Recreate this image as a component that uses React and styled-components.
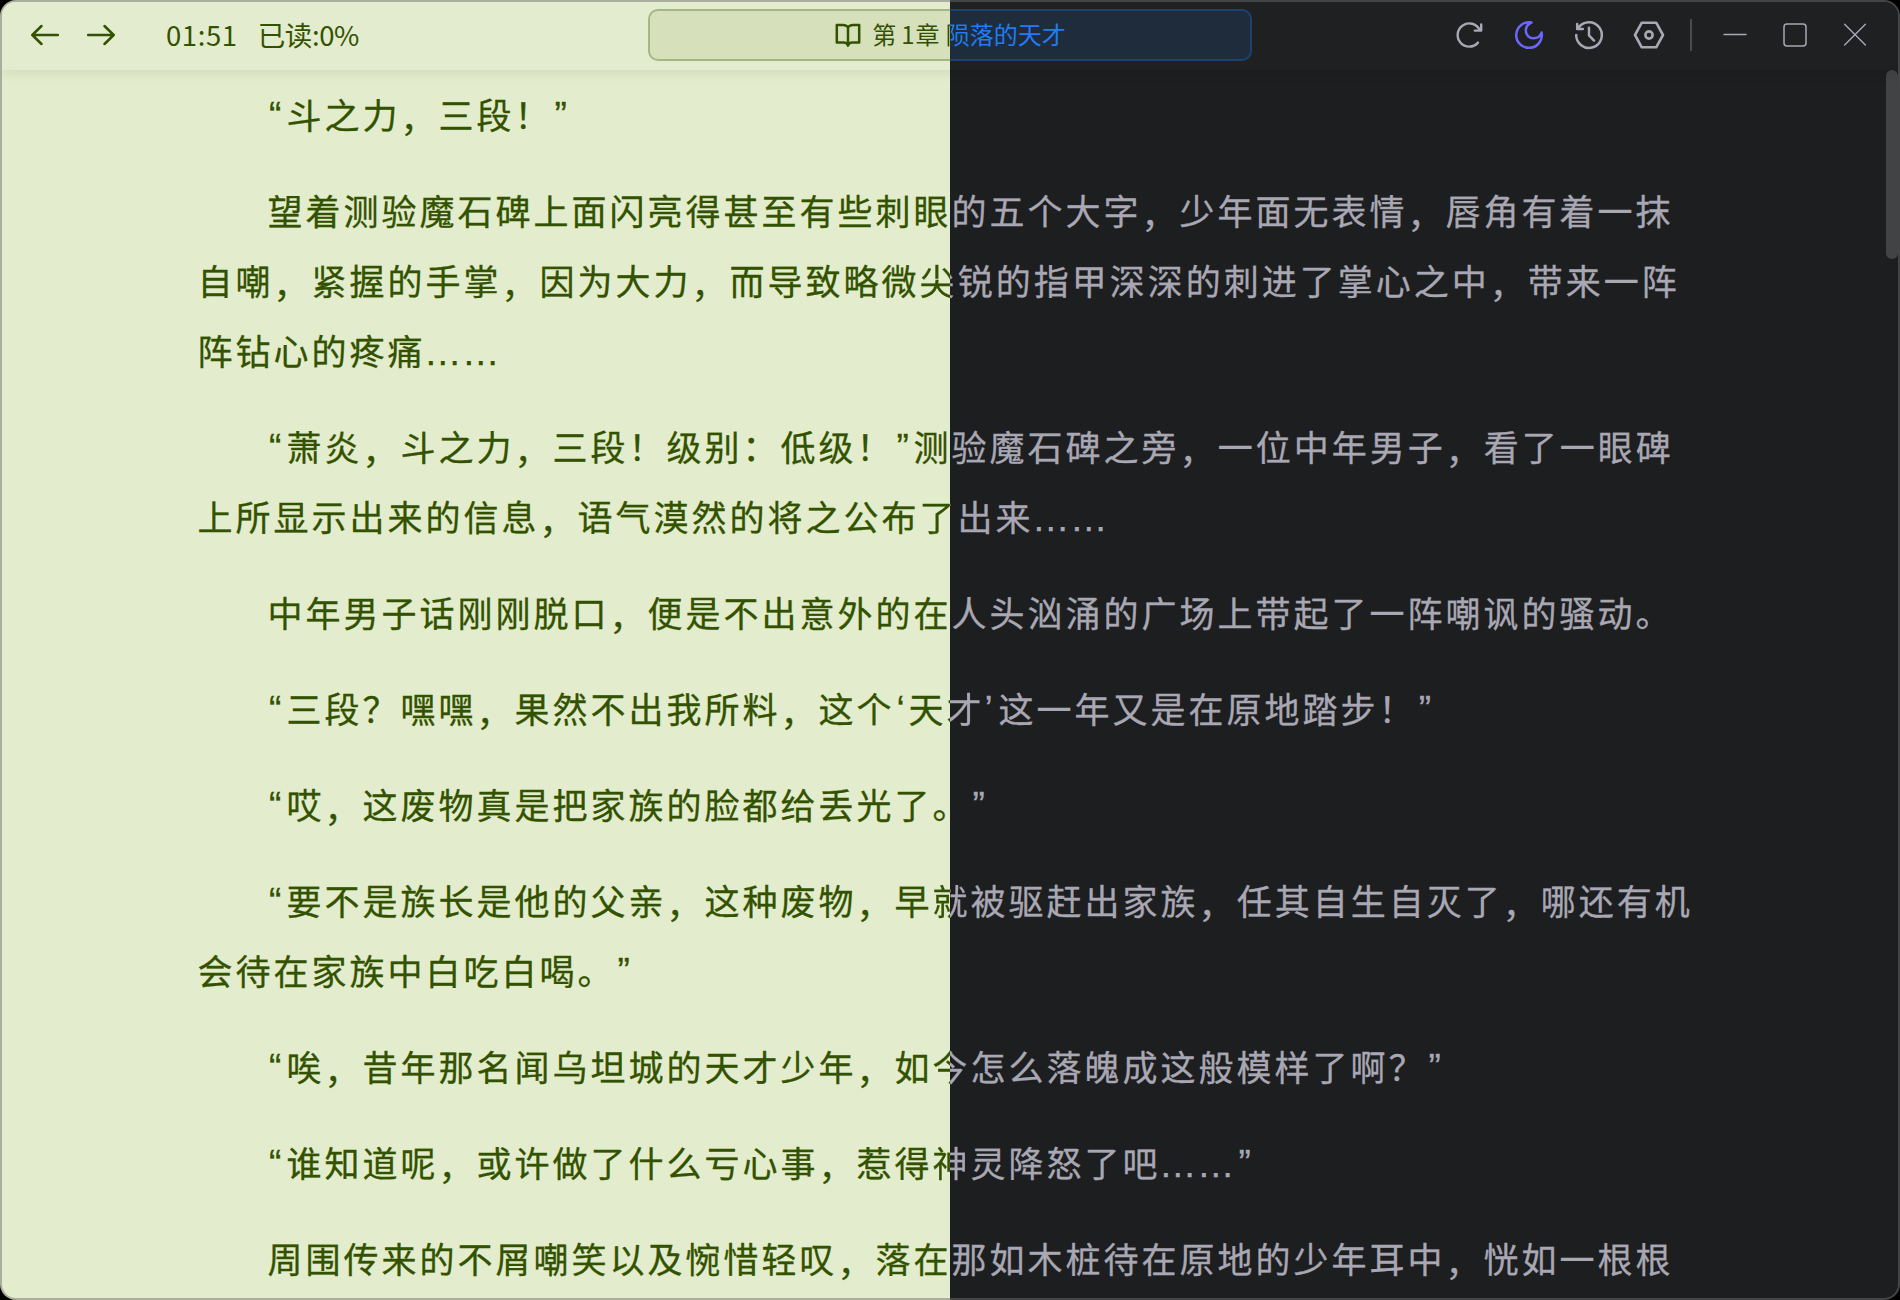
import React from "react";
import styled, { createGlobalStyle, css } from "styled-components";

const light = { ink: "#335200", page: "#e3edcd", bar: "#e3ecce", edge: "#a9ae9d", pill: "#d6e1bb", pillEdge: "#a5b584" };
const dark = { ink: "#a9a7b3", page: "#1c1e1f", bar: "#1f2022", edge: "#434446", pill: "#1f2c3b", pillEdge: "#1c426f" };

const halves = (key) => css`
  background: linear-gradient(90deg, ${light[key]} 50%, ${dark[key]} 50%);
`;

const Global = createGlobalStyle`
  * { box-sizing: border-box; }
  body { margin: 0; background: #000; overflow: hidden; }
`;

const Frame = styled.div`
  width: 1900px;
  height: 1300px;
  padding: 2px;
  border-radius: 16px;
  ${halves("edge")}
  font-family: "Noto Sans CJK SC", sans-serif;
`;

const Window = styled.div`
  display: flex;
  flex-direction: column;
  height: 100%;
  border-radius: 14px;
  overflow: hidden;
  ${halves("page")}
`;

const TopBar = styled.header`
  position: relative;
  z-index: 1;
  flex: none;
  display: grid;
  grid-template-columns: 1fr 604px 1fr;
  align-items: center;
  height: 68px;
  padding-bottom: 2px;
  ${halves("bar")}
  box-shadow: 0 2px 12px rgba(0, 0, 0, 0.09);
`;

const Left = styled.div`
  display: flex;
  align-items: center;
  padding-left: 29px;
  color: ${light.ink};
`;

const NavIcon = styled.svg`
  width: 28px;
  height: 28px;
  margin-right: 28px;
  flex: none;
`;

const Status = styled.span`
  font-size: 27.5px;
  line-height: 40px;
  padding-bottom: 2px;
  white-space: nowrap;
  margin-left: ${(p) => p.$gap}px;
  letter-spacing: ${(p) => p.$track}px;
`;

const PillEdge = styled.div`
  height: 52px;
  padding: 2px;
  border-radius: 10px;
  ${halves("pillEdge")}
`;

const Pill = styled.div`
  display: flex;
  align-items: center;
  justify-content: center;
  height: 48px;
  border-radius: 8px;
  ${halves("pill")}
  color: ${light.ink};
  font-size: 24px;
  line-height: 36px;
  white-space: pre;
`;

const BookIcon = styled.svg`
  width: 28px;
  height: 28px;
  margin-right: 10px;
`;

const PillText = styled.span`
  padding-bottom: 2px;
`;

const Digit = styled.span`
  margin: 0 1px 0 5px;
`;

const Night = styled.span`
  color: ${(p) => p.$color || dark.ink};
`;

const Across = styled.span`
  color: transparent;
  background: linear-gradient(90deg, ${light.ink} 950px, ${(p) => p.$color || dark.ink} 950px);
  background-attachment: fixed;
  -webkit-background-clip: text;
  background-clip: text;
  margin-left: ${(p) => p.$gap || 0}px;
`;

const Tools = styled.div`
  display: flex;
  align-items: center;
  justify-content: flex-end;
  padding-right: 13px;
  color: ${dark.ink};
`;

const Tool = styled.button`
  display: flex;
  align-items: center;
  justify-content: center;
  width: 60px;
  height: 60px;
  padding: 0;
  border: 0;
  background: none;
  color: ${(p) => p.$color || "inherit"};
`;

const ToolIcon = styled.svg`
  width: 36px;
  height: 36px;
`;

const Divider = styled.div`
  width: 2px;
  height: 32px;
  margin: 0 13px 0 11px;
  background: #4a4b4e;
`;

const Body = styled.div`
  flex: 1;
  min-height: 0;
  display: flex;
  justify-content: space-between;
  overflow: hidden;
`;

const Article = styled.main`
  display: flex;
  flex-direction: column;
  gap: 26px;
  padding: 9px 0 0 195.5px;
  font-size: 35px;
  letter-spacing: 3px;
  -webkit-text-stroke-width: 0.3px;
`;

const Paragraph = styled.p`
  margin: 0;
  color: ${light.ink};
`;

const Line = styled.span`
  display: block;
  height: 70px;
  line-height: 70px;
  white-space: nowrap;
  &:first-child {
    padding-left: 70px;
  }
`;

const Quote = styled.span`
  display: inline-block;
  width: ${(p) => (p.$single ? 14 : 19)}px;
  padding-left: ${(p) => p.$inset}px;
  letter-spacing: 0;
  line-height: 1;
  vertical-align: 1px;
  font-family: "Liberation Sans", sans-serif;
  font-size: 37px;
`;

const Dots = styled.span`
  display: inline-block;
  width: 38px;
  margin-left: -1.5px;
  margin-right: 1.5px;
  letter-spacing: 0;
  line-height: 1;
  font-family: "Liberation Sans", sans-serif;
  font-size: 37.5px;
`;

const Low = styled.span`
  line-height: 1;
  vertical-align: -3px;
`;

const Scrollbar = styled.div`
  width: 12px;
  height: 189px;
  border-radius: 6px;
  background: #424345;
`;

/* Each line: text on the light half, glyph lying across the seam, text on the dark half. */
const chapter = [
  [["“斗之力，三段！”"]],
  [
    ["望着测验魔石碑上面闪亮得甚至有些刺眼", "", "的五个大字，少年面无表情，唇角有着一抹"],
    ["自嘲，紧握的手掌，因为大力，而导致略微", "尖", "锐的指甲深深的刺进了掌心之中，带来一阵"],
    ["阵钻心的疼痛……"],
  ],
  [
    ["“萧炎，斗之力，三段！级别：低级！”测", "", "验魔石碑之旁，一位中年男子，看了一眼碑"],
    ["上所显示出来的信息，语气漠然的将之公布", "了", "出来……"],
  ],
  [["中年男子话刚刚脱口，便是不出意外的在", "", "人头汹涌的广场上带起了一阵嘲讽的骚动。"]],
  [["“三段？嘿嘿，果然不出我所料，这个‘天", "才", "’这一年又是在原地踏步！”"]],
  [["“哎，这废物真是把家族的脸都给丢光了。", "", "”"]],
  [
    ["“要不是族长是他的父亲，这种废物，早", "就", "被驱赶出家族，任其自生自灭了，哪还有机"],
    ["会待在家族中白吃白喝。”"],
  ],
  [["“唉，昔年那名闻乌坦城的天才少年，如", "今", "怎么落魄成这般模样了啊？”"]],
  [["“谁知道呢，或许做了什么亏心事，惹得", "神", "灵降怒了吧……”"]],
  [["周围传来的不屑嘲笑以及惋惜轻叹，落在", "", "那如木桩待在原地的少年耳中，恍如一根根"]],
];

const insets = { "“": 1.5, "”": 2, "‘": 2, "’": 0 };

const typeset = (text) =>
  text
    .split(/([“”‘’…，])/)
    .filter(Boolean)
    .map((part, i) => {
      if (part === "…") return <Dots key={i}>{part}</Dots>;
      if (part === "，") return <Low key={i}>{part}</Low>;
      if (part in insets)
        return (
          <Quote key={i} $single={/[‘’]/.test(part)} $inset={insets[part]}>
            {part}
          </Quote>
        );
      return part;
    });

const stroke = { fill: "none", stroke: "currentColor", strokeLinecap: "round", strokeLinejoin: "round" };

const ArrowLeft = () => (
  <NavIcon viewBox="0 0 28 28" {...stroke} strokeWidth="2.5">
    <path d="M27 14H1.5M10.5 5L1.3 14l9.2 9" />
  </NavIcon>
);
const ArrowRight = () => (
  <NavIcon viewBox="0 0 28 28" {...stroke} strokeWidth="2.5">
    <path d="M1 14h25.5M17.5 5l9.2 9-9.2 9" />
  </NavIcon>
);
const Book = () => (
  <BookIcon viewBox="0 0 28 28" {...stroke} strokeWidth="2.5">
    <path d="M14 6.4C12.6 4.4 11 4 9 4H2.8v17.6H9.8c2 0 3.4.6 4.2 3 .8-2.4 2.2-3 4.2-3h7V4H19c-2 0-3.6.4-5 2.4zM14 6.4v17.6" />
  </BookIcon>
);
const Refresh = () => (
  <ToolIcon viewBox="0 0 36 36" {...stroke} strokeWidth="2.4">
    <path d="M27 25.6A11.6 11.6 0 1 1 28.6 12.8M30.2 7.4v6.2h-6.4" />
  </ToolIcon>
);
const Moon = () => (
  <ToolIcon viewBox="0 0 36 36" {...stroke} strokeWidth="2.5">
    <path d="M20.5 5.5A12.8 12.8 0 1 0 30.6 15.6C29.3 19 26 21.3 22.6 21.3C18.2 21.3 14.8 18 14.8 13.6C14.8 10 17 7 20.5 5.5z" />
  </ToolIcon>
);
const History = () => (
  <ToolIcon viewBox="0 0 36 36" {...stroke} strokeWidth="2.5">
    <path d="M5.2 18A12.8 12.8 0 1 0 7.6 10.6M6.2 7v5h5.6M18 10.8v7.6l5 5.2" />
  </ToolIcon>
);
const Settings = () => (
  <ToolIcon viewBox="0 0 36 36" {...stroke} strokeWidth="2.6">
    <path d="M10.8 5.7h14.4L32 18l-6.8 12.3H10.8L4 18z" />
    <circle cx="18" cy="18" r="3.6" />
  </ToolIcon>
);
const Minimize = () => (
  <ToolIcon viewBox="0 0 36 36" {...stroke} strokeWidth="1.5">
    <path d="M7 17.5h22" />
  </ToolIcon>
);
const Maximize = () => (
  <ToolIcon viewBox="0 0 36 36" {...stroke} strokeWidth="1.5">
    <rect x="7" y="7" width="22" height="22" rx="3" />
  </ToolIcon>
);
const Close = () => (
  <ToolIcon viewBox="0 0 36 36" {...stroke} strokeWidth="1.4">
    <path d="M7.6 7.3l20.8 20.8M28.4 7.3L7.6 28.1" />
  </ToolIcon>
);

export default function App() {
  const blue = "#1f7cf2";
  return (
    <Frame>
      <Global />
      <Window>
        <TopBar>
          <Left>
            <ArrowLeft />
            <ArrowRight />
            <Status $gap={23} $track={0.6}>01:51</Status>
            <Status $gap={20} $track={-0.4}>已读:0%</Status>
          </Left>
          <PillEdge>
            <Pill>
              <Book />
              <PillText>
                第<Digit>1</Digit>章 <Across $color={blue} $gap={1}>陨</Across>
                <Night $color={blue}>落的天才</Night>
              </PillText>
            </Pill>
          </PillEdge>
          <Tools>
            <Tool><Refresh /></Tool>
            <Tool $color="#6d66fb"><Moon /></Tool>
            <Tool><History /></Tool>
            <Tool><Settings /></Tool>
            <Divider />
            <Tool><Minimize /></Tool>
            <Tool><Maximize /></Tool>
            <Tool><Close /></Tool>
          </Tools>
        </TopBar>
        <Body>
          <Article>
            {chapter.map((lines, i) => (
              <Paragraph key={i}>
                {lines.map(([day, seam, night], j) => (
                  <Line key={j}>
                    {typeset(day)}
                    {seam && <Across>{seam}</Across>}
                    {night && <Night>{typeset(night)}</Night>}
                  </Line>
                ))}
              </Paragraph>
            ))}
          </Article>
          <Scrollbar />
        </Body>
      </Window>
    </Frame>
  );
}
